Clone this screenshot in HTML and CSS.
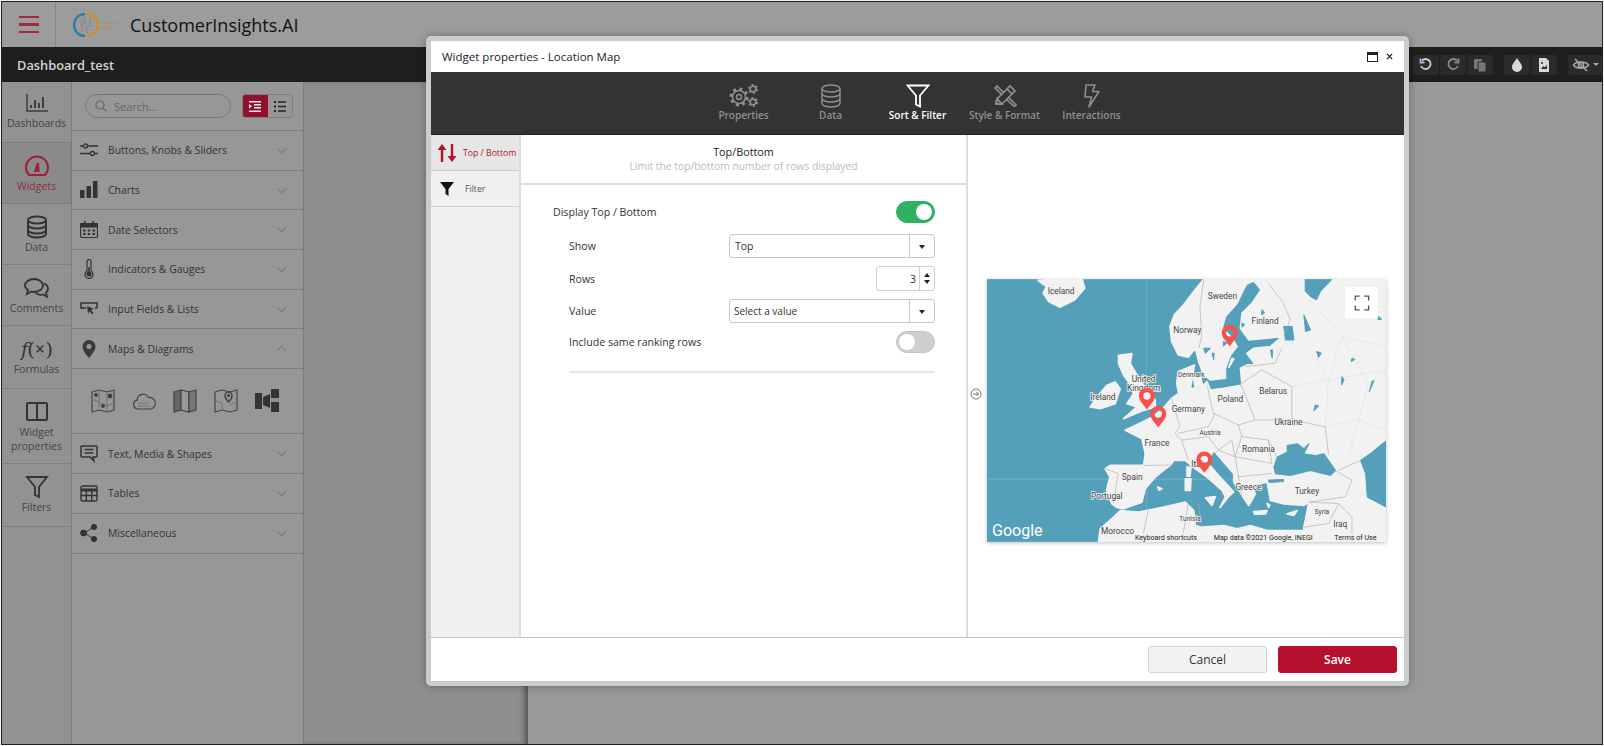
FILE: index.html
```html
<!DOCTYPE html>
<html lang="en">
<head>
  <meta charset="UTF-8" />
  <title>CustomerInsights.AI</title>
  <link rel="stylesheet" href="styles.css">
</head>
<body>

  <div class="app">
    <div class="top-bar">
      <div class="menu-btn"><span></span><span></span><span></span></div>
      <div class="brand">
        <svg class="brand-logo" width="26" height="26" viewBox="0 0 26 26" fill="none">
          <path d="M12 2a11 11 0 0 0 0 22" stroke="#2f7ca8" stroke-width="2.5"/>
          <path d="M14 2a11 11 0 0 1 0 22" stroke="#c98f35" stroke-width="2.5"/>
          <path d="M9 6v14M12 4v8H7M14 22v-8h5M17 6v8" stroke="#8a8a8a" stroke-width="1.3"/>
        </svg>
        <div class="brand-tag">customer<br>insights</div>
        <div class="brand-name">CustomerInsights.AI</div>
      </div>
    </div>

    <div class="title-bar">
      <div class="dash-name">Dashboard_test</div>
      <div class="tools">
        <div class="tool-group">
          <div class="tool-btn"><svg width="16" height="16" viewBox="0 0 16 16" fill="none" stroke="#cfcfcf" stroke-width="1.8"><path d="M4 3.5A5 5 0 1 1 3 9"/><path d="M2.5 1.5v4h4" stroke="#9fc0dc"/></svg></div>
          <div class="tool-btn"><svg width="16" height="16" viewBox="0 0 16 16" fill="none" stroke="#8a8a8a" stroke-width="1.8"><path d="M12 3.5A5 5 0 1 0 13 9"/><path d="M13.5 1.5v4h-4"/></svg></div>
          <div class="tool-btn"><svg width="16" height="16" viewBox="0 0 16 16" fill="#777"><rect x="2" y="2" width="8" height="10" rx="1"/><rect x="6" y="5" width="8" height="10" rx="1" stroke="#2a2a2a"/></svg></div>
        </div>
        <div class="tool-group">
          <div class="tool-btn"><svg width="14" height="16" viewBox="0 0 14 16" fill="#d8d8d8"><path d="M7 1c2 3.5 5 6 5 9a5 5 0 0 1-10 0c0-3 3-5.500 5-9z"/></svg></div>
          <div class="tool-btn"><svg width="14" height="16" viewBox="0 0 14 16" fill="#d8d8d8"><path d="M2 1h7l3 3v11H2z"/><path d="M4 12l2.500-3 1.500 1.500L10 8v4z" fill="#2a2a2a"/><circle cx="5" cy="6" r="1" fill="#2a2a2a"/></svg></div>
        </div>
        <div class="tool-group">
          <div class="tool-btn tool-eye">
            <svg width="18" height="16" viewBox="0 0 18 16" fill="none" stroke="#a8a8a8" stroke-width="1.500"><path d="M1.500 8C4 4 14 4 16.500 8 14 12 4 12 1.500 8z"/><circle cx="9" cy="8" r="2.500"/><path d="M3 2l12 12"/></svg>
            <span class="tool-caret"></span>
          </div>
        </div>
      </div>
    </div>

    <div class="main">
      <div class="rail">
        <div class="rail-item">
          <div class="rail-icon"><svg width="24" height="22" viewBox="0 0 24 22" fill="none" stroke="#3d3d3d" stroke-width="1.500"><path d="M2 2v17h21"/><path d="M6 16v-3M10 16V8M14 16v-5M18 16V5" stroke-width="2"/></svg></div>
          Dashboards
        </div>
        <div class="rail-item active">
          <div class="rail-icon"><svg width="26" height="22" viewBox="0 0 26 22" fill="none" stroke="#97243b" stroke-width="2"><path d="M5 20a11 11 0 1 1 16 0z"/><path d="M11 16l3-8 .5 8z" fill="#97243b"/></svg></div>
          Widgets
        </div>
        <div class="rail-item">
          <div class="rail-icon"><svg width="22" height="24" viewBox="0 0 22 24" fill="none" stroke="#333" stroke-width="2"><ellipse cx="11" cy="5" rx="9" ry="3.500"/><path d="M2 5v14c0 2 4 3.500 9 3.500s9-1.500 9-3.500V5M2 10c0 2 4 3.500 9 3.500s9-1.500 9-3.500M2 15c0 2 4 3.500 9 3.500s9-1.500 9-3.500"/></svg></div>
          Data
        </div>
        <div class="rail-item">
          <div class="rail-icon"><svg width="26" height="22" viewBox="0 0 26 22" fill="none" stroke="#333" stroke-width="1.800"><path d="M10 2c5 0 9 3 9 6.500S15 15 10 15c-1 0-2 0-3-.3L3 17l1-4C2.500 12 1 10.500 1 8.500 1 5 5 2 10 2z"/><path d="M20 6.500c2.500 1 4 3 4 5.200 0 1.600-.8 3-2 4l1 4-4-2.200c-3 .8-6-.2-7.500-2"/></svg></div>
          Comments
        </div>
        <div class="rail-item">
          <div class="rail-icon formula"><i>f</i>(<span class="formula-x">×</span>)</div>
          Formulas
        </div>
        <div class="rail-item">
          <div class="rail-icon"><svg width="24" height="22" viewBox="0 0 24 22" fill="none" stroke="#333" stroke-width="2"><rect x="2" y="2" width="20" height="17" rx="1"/><path d="M12 2v17"/></svg></div>
          Widget properties
        </div>
        <div class="rail-item">
          <div class="rail-icon"><svg width="24" height="24" viewBox="0 0 24 24" fill="none" stroke="#333" stroke-width="1.800"><path d="M2 2h20l-8 10v10l-4-2v-8z"/></svg></div>
          Filters
        </div>
      </div>

      <div class="panel">
        <div class="panel-search">
          <div class="search-box">
            <svg width="12" height="12" viewBox="0 0 12 12" fill="none" stroke="#666" stroke-width="1.200"><circle cx="5" cy="5" r="4"/><path d="M8 8l3.500 3.500"/></svg>
            Search...
          </div>
          <div class="view-btns">
            <div class="view-btn on"><svg width="12" height="11" viewBox="0 0 12 11" fill="#eee"><path d="M0 0h12v1.500H0zM5 3h7v1.500H5zM5 6h7v1.500H5zM0 9.500h12V11H0zM0 3l3 2.300L0 7.600z"/></svg></div>
            <div class="view-btn"><svg width="12" height="11" viewBox="0 0 12 11" fill="#222"><path d="M0 0h2v2H0zM4 .3h8v1.400H4zM0 4.500h2v2H0zM4 4.800h8v1.400H4zM0 9h2v2H0zM4 9.300h8v1.400H4z"/></svg></div>
          </div>
        </div>

        <div class="acc-row">
          <svg class="acc-icon" width="18" height="14" viewBox="0 0 18 14" fill="none" stroke="#333" stroke-width="1.300"><path d="M0 3h3M8 3h10M0 10.500h10M15 10.500h3"/><circle cx="5.500" cy="3" r="2"/><circle cx="12.500" cy="10.500" r="2"/></svg>
          <span class="acc-label">Buttons, Knobs &amp; Sliders</span><span class="chev"></span>
        </div>
        <div class="acc-row">
          <svg class="acc-icon" width="18" height="18" viewBox="0 0 18 18" fill="#333"><rect x="0" y="9" width="4.500" height="8" rx=".5"/><rect x="6.500" y="5" width="4.500" height="12" rx=".5"/><rect x="13" y="0" width="4.500" height="17" rx=".5"/></svg>
          <span class="acc-label">Charts</span><span class="chev"></span>
        </div>
        <div class="acc-row">
          <svg class="acc-icon" width="18" height="17" viewBox="0 0 18 17" fill="#333"><path d="M4 0h1.500v3H4zM12.500 0H14v3h-1.500z"/><path d="M1.500 2.500h15a1 1 0 0 1 1 1V15a1.500 1.500 0 0 1-1.500 1.500H2A1.500 1.500 0 0 1 .5 15V3.500a1 1 0 0 1 1-1z" fill="none" stroke="#333" stroke-width="1.200"/><path d="M0 2.500h18v4H0zM3 8.500h2.500v2H3zM7.700 8.500h2.500v2H7.700zM12.500 8.500H15v2h-2.500zM3 12h2.500v2H3zM7.700 12h2.500v2H7.700zM12.500 12H15v2h-2.500z"/></svg>
          <span class="acc-label">Date Selectors</span><span class="chev"></span>
        </div>
        <div class="acc-row">
          <svg class="acc-icon" width="18" height="20" viewBox="0 0 18 20" fill="none" stroke="#333" stroke-width="1.200"><path d="M7 12V2.500a2 2 0 0 1 4 0V12a4 4 0 1 1-4 0z"/><circle cx="9" cy="15" r="2" fill="#333"/><path d="M9 8v6" stroke-width="1.500"/></svg>
          <span class="acc-label">Indicators &amp; Gauges</span><span class="chev"></span>
        </div>
        <div class="acc-row">
          <svg class="acc-icon" width="18" height="14" viewBox="0 0 18 14" fill="none" stroke="#333" stroke-width="1.500"><path d="M6 6H1V1h16v5h-2"/><path d="M7 4l7 3-3 1 2.500 3-1.500 1.300L9.500 9 8 12z" fill="#333" stroke="none"/></svg>
          <span class="acc-label">Input Fields &amp; Lists</span><span class="chev"></span>
        </div>
        <div class="acc-row">
          <svg class="acc-icon" width="18" height="18" viewBox="0 0 18 18" fill="#3a3a3a"><path fill-rule="evenodd" d="M9 0a6.500 6.500 0 0 1 6.500 6.500C15.500 11 9 18 9 18S2.500 11 2.500 6.500A6.500 6.500 0 0 1 9 0zm0 4a2.500 2.500 0 1 0 0 5 2.500 2.500 0 0 0 0-5z"/></svg>
          <span class="acc-label">Maps &amp; Diagrams</span><span class="chev up"></span>
        </div>

        <div class="widget-grid">
          <svg width="24" height="24" viewBox="0 0 24 24" fill="none" stroke="#444" stroke-width="1.200"><path d="M1 3l7 -2 8 2 7-2v20l-7 2-8-2-7 2z"/><path d="M8 1v20M16 3v20M1 10l7 3 8 4 7-3" stroke="#777"/><circle cx="19" cy="7" r="1.800" fill="#333"/><circle cx="12" cy="17" r="1.300" fill="#333"/><circle cx="5" cy="6" r="1.300" fill="#333"/></svg>
          <svg width="24" height="24" viewBox="0 0 24 24" fill="none" stroke="#444" stroke-width="1.200"><path d="M6 20a4.500 4.500 0 0 1-.8-8.900A6 6 0 0 1 16.500 8.500 5.800 5.800 0 0 1 18.500 20z"/><path d="M6 14h12M6 17h12" stroke="#777"/></svg>
          <svg width="24" height="24" viewBox="0 0 24 24" stroke="#444" stroke-width="1.200"><path d="M1 3l7-2v20l-7 2z" fill="#666"/><path d="M8 1l8 2v20l-8-2z" fill="#999"/><path d="M16 3l7-2v20l-7 2z" fill="#777"/></svg>
          <svg width="24" height="24" viewBox="0 0 24 24" fill="none" stroke="#444" stroke-width="1.200"><path d="M1 3l7-2 8 2 7-2v20l-7 2-8-2-7 2z"/><path d="M1 12l7 2M8 14v7M16 16l7-3" stroke="#777"/><path d="M14.500 13s-3.500-3.500-3.500-6.500a3.500 3.500 0 0 1 7 0c0 3-3.500 6.500-3.500 6.500z" fill="#999" stroke-width="1.500"/><circle cx="14.500" cy="6.500" r="1" fill="#333"/></svg>
          <svg width="24" height="24" viewBox="0 0 24 24" fill="#333"><path d="M0 4h7v16H0zM8 8l7-3v14l-7-3zM16 0h8v9h-8zM16 13h8v10h-8z"/><path d="M16 9h8v4h-8z" fill="#8f8f8f"/></svg>
        </div>

        <div class="acc-row border-top">
          <svg class="acc-icon" width="18" height="18" viewBox="0 0 18 18" fill="none" stroke="#333" stroke-width="1.500"><path d="M2 1h14a1 1 0 0 1 1 1v9a1 1 0 0 1-1 1h-3l1 4-4-4H2a1 1 0 0 1-1-1V2a1 1 0 0 1 1-1z"/><path d="M4.500 4.500h9M4.500 8h9"/></svg>
          <span class="acc-label">Text, Media &amp; Shapes</span><span class="chev"></span>
        </div>
        <div class="acc-row">
          <svg class="acc-icon" width="18" height="17" viewBox="0 0 18 17" fill="none" stroke="#333" stroke-width="1.400"><rect x="1" y="1" width="16" height="15" rx="1.500"/><path d="M1 5h16" stroke-width="3"/><path d="M1 10.500h16M6.300 5v11M11.700 5v11"/></svg>
          <span class="acc-label">Tables</span><span class="chev"></span>
        </div>
        <div class="acc-row">
          <svg class="acc-icon" width="18" height="18" viewBox="0 0 18 18" fill="#333" stroke="#333" stroke-width="1"><path d="M14 3L4 9l10 6" fill="none"/><circle cx="14" cy="3" r="2.600"/><circle cx="3.500" cy="9" r="2.900"/><circle cx="14" cy="15" r="2.600"/></svg>
          <span class="acc-label">Miscellaneous</span><span class="chev"></span>
        </div>
      </div>

      <div class="canvas-side"></div>
      <div class="canvas-page"></div>
    </div>
  </div>

  <div class="dialog">
    <div class="dialog-title">
      <span>Widget properties - Location Map</span>
      <div class="dialog-actions">
        <svg width="11" height="10" viewBox="0 0 11 10"><rect x=".5" y=".5" width="10" height="9" fill="#fff" stroke="#222"/><rect width="11" height="3" fill="#222"/></svg>
        <svg width="7" height="7" viewBox="0 0 8 8" stroke="#222" stroke-width="1.500"><path d="M1 1l6 6M7 1L1 7"/></svg>
      </div>
    </div>

    <div class="dialog-tabs">
      <div class="dlg-tab">
        <svg width="30" height="24" viewBox="0 0 30 24" fill="none" stroke="#8f8f8f" stroke-width="1.500"><circle cx="10" cy="13" r="6.500"/><circle cx="10" cy="13" r="8" stroke-width="3" stroke-dasharray="3 3.300"/><circle cx="10" cy="13" r="2.500"/><circle cx="24" cy="5" r="2.800"/><circle cx="24" cy="5" r="4" stroke-width="2" stroke-dasharray="2 2.200"/><circle cx="24" cy="18" r="2.800"/><circle cx="24" cy="18" r="4" stroke-width="2" stroke-dasharray="2 2.200"/></svg>
        Properties
      </div>
      <div class="dlg-tab">
        <svg width="20" height="24" viewBox="0 0 20 24" fill="none" stroke="#8f8f8f" stroke-width="1.500"><ellipse cx="10" cy="4.500" rx="9" ry="3.500"/><path d="M1 4.500v15c0 2 4 3.500 9 3.500s9-1.500 9-3.500v-15M1 9.500c0 2 4 3.500 9 3.500s9-1.500 9-3.500M1 14.500c0 2 4 3.500 9 3.500s9-1.500 9-3.500"/></svg>
        Data
      </div>
      <div class="dlg-tab current">
        <svg width="24" height="24" viewBox="0 0 24 24" fill="none" stroke="#fff" stroke-width="1.800"><path d="M1.500 1.500h21l-8.500 10v11l-4-2v-9z"/></svg>
        Sort &amp; Filter
      </div>
      <div class="dlg-tab">
        <svg width="24" height="24" viewBox="0 0 24 24" fill="none" stroke="#8f8f8f" stroke-width="1.700"><path d="M2 4l2-2 19 19-2 1.500z"/><path d="M3 20l1-5L17 2l5 5L9 20z" fill="#333"/><path d="M3 20l1-5 5 5z"/><path d="M14 5l5 5"/></svg>
        Style &amp; Format
      </div>
      <div class="dlg-tab">
        <svg width="18" height="24" viewBox="0 0 18 24" fill="none" stroke="#8f8f8f" stroke-width="1.600" stroke-linejoin="round"><path d="M3 1h9L9.500 7.500H16L6 23l2.500-10H2z"/></svg>
        Interactions
      </div>
    </div>

    <div class="dialog-body">
      <div class="side-tabs">
        <div class="side-tab current">
          <svg width="20" height="18" viewBox="0 0 20 18" fill="#b5112f"><path d="M5 0l4.500 6H6.200v12H3.800V6H.5zM15 18l-4.500-6h3.300V0h2.400v12h3.300z"/></svg>
          Top / Bottom
        </div>
        <div class="side-tab">
          <svg class="side-funnel" width="14" height="14" viewBox="0 0 14 14" fill="#111"><path d="M0 0h14L8.500 7v7l-3-2V7z"/></svg>
          Filter
        </div>
      </div>

      <div class="settings">
        <div class="settings-head">
          <div class="settings-title">Top/Bottom</div>
          <div class="settings-sub">Limit the top/bottom number of rows displayed</div>
        </div>
        <div class="settings-form">
          <div class="form-row first">
            <span>Display Top / Bottom</span>
            <div class="switch on"><span class="knob"></span></div>
          </div>
          <div class="form-sub">
            <div class="form-row">
              <span>Show</span>
              <div class="select"><span>Top</span><b class="select-arrow"></b></div>
            </div>
            <div class="form-row">
              <span>Rows</span>
              <div class="number"><span>3</span><b class="spin"><i class="spin-up"></i><i class="spin-down"></i></b></div>
            </div>
            <div class="form-row">
              <span>Value</span>
              <div class="select value"><span>Select a value</span><b class="select-arrow"></b></div>
            </div>
            <div class="form-row">
              <span>Include same ranking rows</span>
              <div class="switch"><span class="knob"></span></div>
            </div>
            <div class="form-rule"></div>
          </div>
        </div>
      </div>

      <div class="preview">
        <svg class="collapse-arrow" width="12" height="12" viewBox="0 0 12 12" fill="none" stroke="#777"><circle cx="6" cy="6" r="5"/><path d="M3 6h5.500M6.500 4l2 2-2 2"/></svg>
        <svg class="map" width="399" height="263" viewBox="37 28 1195 787">
          <rect x="37" y="28" width="1195" height="787" fill="#54a0ba"/>
          <path d="M37 627H1232M515 28V815" stroke="#7db7ca" stroke-width="2"/>
          <g class="map-land">
            <path d="M190 32L215 50L205 70L222 95L255 112L300 90L330 55L322 28H235Z"/>
            <path d="M686 28L656 65L626 105L598 135L585 170L590 215L610 255L640 262L661 235L671 275L686 315L706 330L751 325L751 295L766 255L786 230L771 205L741 175L751 140L786 100L800 70L814 43L836 33L858 60L831 100L801 130L796 175L821 210L876 205L921 200L886 230L836 235L816 250L841 285L816 285L796 295L801 345L746 355L706 360L696 335L676 355L646 355L651 330L658 285L610 305L605 340L611 370L590 385L560 420L525 445L490 462L451 481L501 506L511 551L506 586L406 586L391 596L405 620L395 660L410 700L426 712L446 716L501 696L511 656L541 621L566 601L586 586L596 571L631 571L661 596L696 621L741 661L751 680L735 712L760 680L776 665L731 616L696 576L716 541L776 611L776 636L801 676L821 706L841 671L826 646L876 636L886 691L926 701L986 706L1001 696L996 721L986 771L986 815H1232V28H1076L1040 65L1026 95L1006 85L986 65L986 28Z"/>
            <path d="M431 256L471 251L466 281L496 331L520 365L541 391L541 411L506 421L446 446L486 411L456 401L476 371L461 336L446 316L431 281Z"/>
            <path d="M396 346L421 336L436 356L421 401L376 416L346 411L366 381Z"/>
            <path d="M371 815L376 776L416 741L436 721L491 726L566 711L631 696L656 721L661 766L681 771L746 766L786 776L826 766L876 781L986 781V815Z"/>
            <path d="M691 683L721 679L711 706ZM631 626L648 626L646 661L631 661ZM636 590L648 592L645 618L636 618ZM548 651L561 656L552 660ZM836 724L876 721L871 731L838 732ZM936 731L966 721L956 736ZM656 325L676 320L684 350L660 352ZM771 265L776 268L761 292ZM816 250L840 250L826 265ZM876 700L884 705L880 712Z"/>
          </g>
          <g class="map-water">
            <path d="M896 591L906 561L936 546L936 526L966 521L986 536L1001 521L986 551L1021 556L1046 551L1081 601L1066 616L1006 601L946 616L901 611Z"/>
            <path d="M880 630L925 628L925 634L882 637Z"/>
            <path d="M1234 511L1191 546L1156 571L1171 611L1176 681L1234 711Z"/>
            <path d="M926 170L951 170L956 210L931 210ZM986 135L1006 180L991 185ZM886 240L892 240L891 265ZM686 235L706 235L691 250ZM711 250L717 250L716 270Z"/>
            <path d="M1024 245L1038 250L1030 262ZM1135 105L1145 110L1138 118ZM1100 320L1106 330L1099 345ZM1190 335L1196 332L1182 365ZM1020 405L1030 408L1016 422ZM1130 265L1138 268L1128 275ZM800 160L808 163L802 172ZM860 120L868 128L860 135ZM1210 140L1218 148L1208 150ZM745 215L755 220L745 228Z"/>
          </g>
          <g fill="none" stroke="#a8a8a8" stroke-width="1.800">
            <path d="M686 28L675 110L680 200L671 235M880 40L925 100L945 150L925 200"/>
            <path d="M590 385L615 470L600 490M696 345L715 430M610 490L700 470L720 430"/>
            <path d="M796 340L840 450L790 465L715 430M506 586L590 585M620 510L640 570M620 510L700 500L730 540L700 570"/>
            <path d="M391 596L430 610L415 700M840 450L950 450L1050 470L1060 555M790 465L800 500L880 510L906 561"/>
            <path d="M800 340L860 300L950 350L950 450M800 500L780 560L890 580L880 510M730 540L780 560L790 620L890 610M790 620L800 680"/>
            <path d="M1001 696L1090 700L1060 760L986 771M1090 700L1130 740V815M1001 696L1110 680L1130 630M810 290L900 280L920 235"/>
            <path d="M520 720L500 815M640 700L620 815M670 700L680 770M600 490L620 510M770 510L780 560M730 540L770 510"/>
            <path d="M1090 600L1156 571M1080 601L1130 630"/>
          </g>
          <g fill="none" stroke="#cccccc" stroke-width="1.500" stroke-dasharray="5 4">
            <path d="M950 350L1060 330L1232 300M1000 85L1100 200L1232 230M1050 470L1150 450L1232 480M1100 200L1060 330M1150 450L1180 340L1232 300"/>
            <path d="M925 205L1020 260L1060 330M1060 330L1050 470M1150 450L1120 560M1120 120L1232 110M1180 340L1100 200"/>
          </g>
          <g class="map-labels">
            <text x="259" y="72">Iceland</text>
            <text x="742" y="89">Sweden</text>
            <text x="870" y="163">Finland</text>
            <text x="637" y="190">Norway</text>
            <text x="649" y="322" class="small">Denmark</text>
            <text x="506" y="337">United</text>
            <text x="506" y="363">Kingdom</text>
            <text x="384" y="391">Ireland</text>
            <text x="766" y="396">Poland</text>
            <text x="894" y="372">Belarus</text>
            <text x="640" y="425">Germany</text>
            <text x="940" y="465">Ukraine</text>
            <text x="705" y="495" class="small">Austria</text>
            <text x="546" y="529">France</text>
            <text x="850" y="545">Romania</text>
            <text x="472" y="630">Spain</text>
            <text x="672" y="592">Italy</text>
            <text x="820" y="661">Greece</text>
            <text x="396" y="686">Portugal</text>
            <text x="995" y="671">Turkey</text>
            <text x="1040" y="733" class="small">Syria</text>
            <text x="645" y="752" class="small">Tunisia</text>
            <text x="1095" y="771">Iraq</text>
            <text x="428" y="790">Morocco</text>
          </g>
          <g fill="#f5524b">
            <path fill-rule="evenodd" d="M764 165a24 24 0 0 1 24 24c0 15-16 28-24 41-8-13-24-26-24-41a24 24 0 0 1 24-24zm0 13a11 11 0 1 0 0 22 11 11 0 0 0 0-22z"/>
            <path fill-rule="evenodd" d="M516 354a24 24 0 0 1 24 24c0 15-16 28-24 41-8-13-24-26-24-41a24 24 0 0 1 24-24zm0 13a11 11 0 1 0 0 22 11 11 0 0 0 0-22z"/>
            <path fill-rule="evenodd" d="M550 408a24 24 0 0 1 24 24c0 15-16 28-24 41-8-13-24-26-24-41a24 24 0 0 1 24-24zm0 13a11 11 0 1 0 0 22 11 11 0 0 0 0-22z"/>
            <path fill-rule="evenodd" d="M688 544a24 24 0 0 1 24 24c0 15-16 28-24 41-8-13-24-26-24-41a24 24 0 0 1 24-24zm0 13a11 11 0 1 0 0 22 11 11 0 0 0 0-22z"/>
          </g>
          <rect x="1110" y="52" width="98" height="93" fill="#fff"/>
          <path d="M1140 92V79H1153M1167 79H1180V92M1180 107V120H1167M1153 120H1140V107" fill="none" stroke="#555" stroke-width="4"/>
          <text x="52" y="797" class="map-google">Google</text>
          <rect x="476" y="788" width="756" height="27" fill="#f2f2f2" fill-opacity=".75"/>
          <g class="map-credits">
            <text x="480" y="809">Keyboard shortcuts</text>
            <text x="716" y="809">Map data ©2021 Google, INEGI</text>
            <text x="1077" y="809">Terms of Use</text>
          </g>
        </svg>
      </div>
    </div>

    <div class="dialog-foot">
      <button class="btn">Cancel</button>
      <button class="btn save">Save</button>
    </div>
  </div>

</body>
</html>
```

FILE: styles.css
```css
* {
  box-sizing: border-box;
}

body {
  margin: 0;
  padding: 1px;
  width: 1604px;
  height: 746px;
  overflow: hidden;
  position: relative;
  background: #f4f4f4;
  font-family: 'Open Sans', sans-serif;
  font-size: 11px;
  color: #333;
}

.app {
  width: 1602px;
  height: 744px;
  border: 1px solid #222;
  display: flex;
  flex-direction: column;
  background: #999;
}

/* top bars */
.top-bar {
  height: 45px;
  display: flex;
  background: #9c9c9c;
}

.menu-btn {
  width: 54px;
  border-right: 1px solid #858585;
  display: flex;
  flex-direction: column;
  justify-content: center;
  gap: 5px;
  padding-left: 17px;
}

.menu-btn span {
  width: 20px;
  height: 2.500px;
  background: #a42a42;
}

.brand {
  display: flex;
  align-items: center;
  padding-left: 17px;
}

.brand-tag {
  width: 31px;
  padding-left: 1px;
  font-size: 4px;
  line-height: 5px;
  color: #b08a4a;
}

.brand-name {
  font-size: 18px;
  font-weight: 500;
  color: #111;
}

.title-bar {
  height: 35px;
  background: #1e1e1e;
  display: flex;
  align-items: center;
  justify-content: space-between;
  padding-left: 15px;
}

.dash-name {
  font-size: 12.800px;
  font-weight: 600;
  color: #d4d4d4;
}

.tools {
  display: flex;
  gap: 11px;
}

.tool-group {
  display: flex;
  gap: 1px;
}

.tool-btn {
  width: 26px;
  height: 20px;
  background: #2b2b2b;
  border-radius: 3px;
  display: flex;
  align-items: center;
  justify-content: center;
}

.tool-eye {
  width: 34px;
  gap: 3px;
}

.tool-caret {
  border-left: 3px solid transparent;
  border-right: 3px solid transparent;
  border-top: 3px solid #aaa;
}

/* left side */
.main {
  flex: 1;
  display: flex;
  min-height: 0;
}

.rail {
  width: 70px;
  background: #929292;
  border-right: 1px solid #7c7c7c;
  display: grid;
  grid-template-rows: 61px 61px 61px 61px 63px 75px 63px;
  align-content: start;
  flex: none;
}

.rail-item {
  padding-top: 10px;
  border-bottom: 1px solid #7f7f7f;
  text-align: center;
  font-size: 10.500px;
  line-height: 14px;
  color: #444;
}

.rail-item:first-child {
  padding-top: 8px;
}

.rail-item.active {
  background: #8a8a8a;
  color: #8f2a3e;
}

.rail-icon {
  height: 26px;
  display: flex;
  align-items: center;
  justify-content: center;
}

.formula {
  font-family: 'DejaVu Serif', serif;
  font-size: 19px;
  letter-spacing: -1px;
  color: #333;
}

.formula-x {
  font-size: 13px;
  font-weight: bold;
  padding: 0 1px;
}

.panel {
  width: 232px;
  flex: none;
  background: #979797;
  border-right: 1px solid #7c7c7c;
}

.panel-search {
  height: 49px;
  padding: 12px 9px 0 13px;
  display: flex;
  gap: 11px;
  border-bottom: 1px solid #7f7f7f;
}

.search-box {
  width: 146px;
  height: 24px;
  border: 1px solid #777;
  border-radius: 12px;
  display: flex;
  align-items: center;
  gap: 7px;
  padding-left: 9px;
  color: #666;
}

.view-btns {
  display: flex;
  width: 51px;
  height: 24px;
  border: 1px solid #808080;
  border-radius: 3px;
  overflow: hidden;
}

.view-btn {
  flex: 1;
  display: flex;
  align-items: center;
  justify-content: center;
}

.view-btn.on {
  background: #93102c;
}

.acc-row {
  height: 39.700px;
  padding-left: 8px;
  display: flex;
  align-items: center;
  border-bottom: 1px solid #7f7f7f;
}

.acc-row.border-top {
  height: 40px;
}

.acc-icon {
  flex: none;
}

.acc-label {
  margin-left: 10px;
  font-size: 10.400px;
  color: #2f3338;
}

.chev {
  width: 7px;
  height: 7px;
  margin-left: auto;
  margin-right: 18px;
  margin-top: -4px;
  border-right: 1px solid #7a7a7a;
  border-bottom: 1px solid #7a7a7a;
  transform: rotate(45deg);
}

.chev.up {
  margin-top: 4px;
  transform: rotate(225deg);
}

.widget-grid {
  height: 65px;
  padding-left: 19px;
  display: flex;
  align-items: center;
  gap: 17px;
  border-bottom: 1px solid #7f7f7f;
}

.canvas-side {
  width: 224px;
  flex: none;
  background: #8e8f90;
  box-shadow: inset -6px 0 6px -3px rgba(0, 0, 0, 0.45);
}

.canvas-page {
  flex: 1;
  background: #999;
}

/* dialog */
.dialog {
  position: absolute;
  left: 426px;
  top: 36px;
  width: 983px;
  height: 650px;
  background: #fff;
  border: 5px solid #cccccc;
  border-radius: 5px;
  box-shadow: 0 0 10px rgba(0, 0, 0, 0.3);
  display: flex;
  flex-direction: column;
}

.dialog-title {
  height: 31px;
  flex: none;
  padding: 0 11px 0 11px;
  display: flex;
  align-items: center;
  justify-content: space-between;
  font-size: 11.500px;
  color: #222;
}

.dialog-actions {
  display: flex;
  align-items: center;
  gap: 8px;
}

.dialog-tabs {
  height: 63px;
  flex: none;
  background: #333;
  border-bottom: 1px solid #222;
  display: flex;
  justify-content: center;
  padding-top: 12px;
}

.dlg-tab {
  width: 87px;
  display: flex;
  flex-direction: column;
  align-items: center;
  white-space: nowrap;
  font-size: 10px;
  color: #8f8f8f;
  font-weight: 600;
}

.dlg-tab.current {
  color: #fff;
}

.dialog-body {
  flex: 1;
  display: flex;
  min-height: 0;
}

.side-tabs {
  width: 90px;
  flex: none;
  background: #f0f0f0;
  border-right: 2px solid #dcdcdc;
}

.side-tab {
  height: 36px;
  display: flex;
  align-items: center;
  gap: 6px;
  padding-left: 6px;
  border-bottom: 1px solid #cfcfcf;
  font-size: 8.700px;
  white-space: nowrap;
  color: #555;
}

.side-tab.current {
  background: #e6e6e6;
  color: #b5112f;
}

.side-funnel {
  margin: 0 5px 0 3px;
}

.settings {
  width: 447px;
  flex: none;
  border-right: 2px solid #dcdcdc;
}

.settings-head {
  height: 50px;
  padding-top: 10px;
  text-align: center;
  border-bottom: 2px solid #dcdcdc;
  line-height: 14px;
}

.settings-title {
  font-size: 10.800px;
  color: #222;
}

.settings-sub {
  font-size: 10.300px;
  color: #bbb;
}

.settings-form {
  padding: 16px 31px 0 32px;
  font-size: 10.600px;
  color: #333;
}

.form-row {
  display: flex;
  align-items: center;
  justify-content: space-between;
  margin-bottom: 8px;
}

.form-row.first {
  margin-bottom: 11px;
}

.form-sub {
  margin-left: 16px;
}

.switch {
  width: 39px;
  height: 22px;
  padding: 2px;
  border-radius: 11px;
  background: #cfcfcf;
  border: 1px solid #c4c4c4;
  display: flex;
}

.switch.on {
  background: #2fb163;
  border-color: #2fb163;
  justify-content: flex-end;
}

.knob {
  width: 16px;
  height: 16px;
  border-radius: 50%;
  background: #fff;
}

.select {
  width: 206px;
  height: 24px;
  border: 1px solid #c8c8c8;
  border-radius: 3px;
  display: flex;
  align-items: center;
  justify-content: space-between;
  padding-left: 5px;
  font-size: 10.500px;
}

.select.value {
  padding-left: 4px;
  font-size: 10px;
}

.select-arrow {
  width: 25px;
  height: 100%;
  border-left: 1px solid #c8c8c8;
  position: relative;
}

.select-arrow::after {
  content: "";
  position: absolute;
  left: 9px;
  top: 10px;
  border-left: 3.500px solid transparent;
  border-right: 3.500px solid transparent;
  border-top: 4px solid #222;
}

.number {
  width: 59px;
  height: 25px;
  border: 1px solid #cfcfcf;
  border-radius: 3px;
  display: flex;
  align-items: center;
  justify-content: flex-end;
  gap: 3px;
  font-size: 10.500px;
}

.spin {
  width: 15px;
  height: 100%;
  border-left: 1px solid #cfcfcf;
  display: flex;
  flex-direction: column;
  align-items: center;
  justify-content: center;
  gap: 3px;
}

.spin-up,
.spin-down {
  border-left: 3px solid transparent;
  border-right: 3px solid transparent;
}

.spin-up {
  border-bottom: 4px solid #222;
}

.spin-down {
  border-top: 4px solid #222;
}

.form-rule {
  height: 2px;
  margin-top: 18px;
  background: #e8e8e8;
}

.preview {
  flex: 1;
  position: relative;
  padding: 144px 0 0 19px;
}

.collapse-arrow {
  position: absolute;
  left: 2px;
  top: 253px;
}

.map {
  display: block;
  box-shadow: 0 1px 4px rgba(0, 0, 0, 0.25);
}

.map-land {
  fill: #f2f2f2;
  stroke: #f2f2f2;
  stroke-width: 5px;
  stroke-linejoin: round;
}

.map-water {
  fill: #54a0ba;
  stroke: #54a0ba;
  stroke-width: 3px;
  stroke-linejoin: round;
}

.map-labels text {
  font-family: Roboto, sans-serif;
  font-size: 25px;
  text-anchor: middle;
  fill: #444;
  stroke: #f2f2f2;
  stroke-width: 5px;
  paint-order: stroke;
}

.map-labels text.small {
  font-size: 20px;
}

.map-google {
  font-family: Roboto, sans-serif;
  font-size: 48px;
  fill: #fff;
}

.map-credits text {
  font-family: Roboto, sans-serif;
  font-size: 21.500px;
  fill: #222;
}

.dialog-foot {
  height: 44px;
  flex: none;
  border-top: 1px solid #c4c4c4;
  display: flex;
  justify-content: flex-end;
  gap: 11px;
  padding: 8px 7px 0 0;
}

.btn {
  width: 119px;
  height: 27px;
  border: 1px solid #d2d2d2;
  border-radius: 3px;
  background: #f2f2f2;
  font-family: 'Open Sans', sans-serif;
  font-size: 12px;
  color: #333;
}

.btn.save {
  background: #b5112f;
  border-color: #b5112f;
  color: #fff;
  font-weight: 600;
}
```
